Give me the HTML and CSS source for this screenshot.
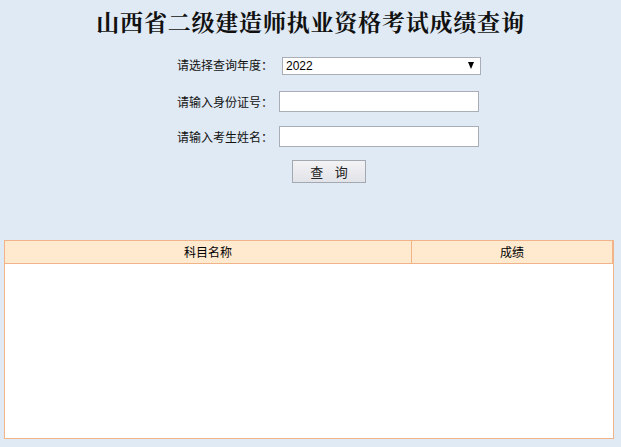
FILE: index.html
```html
<!DOCTYPE html>
<html lang="zh-CN">
<head>
<meta charset="utf-8">
<title>山西省二级建造师执业资格考试成绩查询</title>
<link rel="stylesheet" href="styles.css">
</head>
<body>
<div class="page">
  <h1 class="title">山西省二级建造师执业资格考试成绩查询</h1>
  <form class="query">
    <div class="row row-first">
      <label class="lbl">请选择查询年度：</label>
      <div class="select-wrap">
        <select class="sel"><option>2022</option></select>
      </div>
    </div>
    <div class="row">
      <label class="lbl">请输入身份证号：</label>
      <input class="txt" type="text">
    </div>
    <div class="row">
      <label class="lbl">请输入考生姓名：</label>
      <input class="txt" type="text">
    </div>
    <div class="btn-row">
      <button type="button" class="btn">查&nbsp;&nbsp;&nbsp;&nbsp;询</button>
    </div>
  </form>
  <table class="result">
    <thead>
      <tr><th class="c1">科目名称</th><th class="c2">成绩</th></tr>
    </thead>
    <tbody>
      <tr><td class="empty" colspan="2"></td></tr>
    </tbody>
  </table>
</div>
</body>
</html>
```
FILE: styles.css
```css
html, body {
  margin: 0;
  padding: 0;
  background: #e0eaf4;
}
body {
  font-family: "Noto Sans CJK SC", "Liberation Sans", sans-serif;
  font-size: 12px;
  color: #000;
}
.page {
  width: 621px;
  height: 447px;
  overflow: hidden;
}
.title {
  margin: 0;
  padding-top: 6px;
  height: 34px;
  line-height: 32px;
  text-align: center;
  font-family: "Noto Serif CJK SC", "Noto Sans CJK SC", serif;
  font-size: 23px;
  letter-spacing: 0.8px;
  font-weight: bold;
  color: #111;
}
.query {
  margin: 5px 0 0 0;
  padding-left: 177px;
}
.row {
  display: flex;
  align-items: center;
  height: 35px;
}
.row-first {
  height: 39px;
}
.lbl {
  width: 96px;
  text-align: left;
  font-size: 12px;
  line-height: 16px;
  color: #111;
}
.select-wrap {
  position: relative;
  margin-left: 9px;
  width: 199px;
  height: 18px;
}
.select-wrap::after {
  content: "";
  position: absolute;
  right: 7px;
  top: 6px;
  border-left: 3.5px solid transparent;
  border-right: 3.5px solid transparent;
  border-top: 7px solid #000;
  pointer-events: none;
}
.sel {
  -webkit-appearance: none;
  appearance: none;
  width: 199px;
  height: 18px;
  margin: 0;
  padding: 0 0 0 3px;
  border: 1px solid #a9adb5;
  border-radius: 0;
  background: #fff;
  font-family: "Liberation Sans", sans-serif;
  font-size: 12px;
  line-height: 16px;
  color: #000;
  box-sizing: border-box;
}
.txt {
  margin: 0 0 0 6px;
  width: 200px;
  height: 21px;
  padding: 0 2px;
  border: 1px solid #a9adb5;
  border-radius: 0;
  background: #fff;
  box-sizing: border-box;
}
.btn-row {
  padding-left: 115px;
  margin-top: 6px;
}
.btn {
  width: 74px;
  height: 23px;
  margin: 0;
  padding: 0;
  border: 1px solid #a4a8b0;
  border-radius: 0;
  background: linear-gradient(#f3f3f5, #e2e3e8);
  font-family: "Noto Sans CJK SC", sans-serif;
  font-size: 13px;
  line-height: 20px;
  color: #222;
}
.result {
  margin: 57px 0 0 4px;
  width: 610px;
  border-collapse: collapse;
  background: #fff;
}
.result th {
  height: 22px;
  padding: 0;
  background: #ffe9cf;
  border: 1px solid #f0b488;
  font-weight: normal;
  font-size: 12px;
  line-height: 20px;
  text-align: center;
}
.result th.c1 {
  width: 406px;
}
.result th.c2 {
  border-right-width: 2px;
}
.result td.empty {
  height: 174px;
  padding: 0;
  border: 1px solid #f0b488;
  border-top: none;
  background: #fff;
}
```
